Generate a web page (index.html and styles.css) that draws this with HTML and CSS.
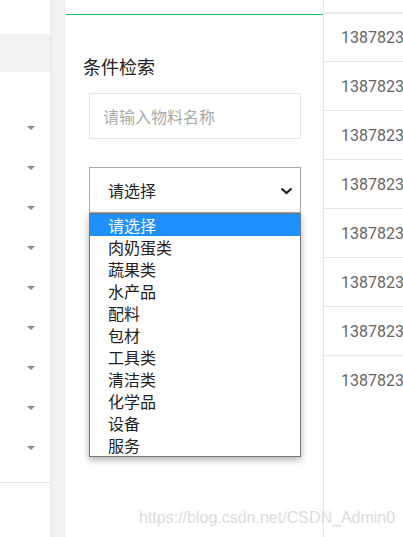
FILE: index.html
```html
<!DOCTYPE html>
<html lang="zh">
<head>
<meta charset="utf-8">
<link rel="stylesheet" href="styles.css">
</head>
<body>
<div class="layout">
  <aside class="sidebar">
    <div class="side-active"></div>
    <ul class="menu">
      <li><span class="caret"></span></li>
      <li><span class="caret"></span></li>
      <li><span class="caret"></span></li>
      <li><span class="caret"></span></li>
      <li><span class="caret"></span></li>
      <li><span class="caret"></span></li>
      <li><span class="caret"></span></li>
      <li><span class="caret"></span></li>
      <li><span class="caret"></span></li>
    </ul>
  </aside>
  <div class="gutter"></div>
  <section class="panel">
    <div class="panel-bar"></div>
    <h2 class="title">条件检索</h2>
    <div class="field">
      <div class="input">请输入物料名称</div>
      <div class="select">
        <span>请选择</span>
        <svg class="chev" width="13" height="8" viewBox="0 0 13 8"><polyline points="1.5,1.5 6.5,6 11.5,1.5" fill="none" stroke="#222" stroke-width="2.2"/></svg>
      </div>
      <ul class="dropdown">
        <li class="on">请选择</li>
        <li>肉奶蛋类</li>
        <li>蔬果类</li>
        <li>水产品</li>
        <li>配料</li>
        <li>包材</li>
        <li>工具类</li>
        <li>清洁类</li>
        <li>化学品</li>
        <li>设备</li>
        <li>服务</li>
      </ul>
    </div>
  </section>
  <section class="table">
    <div class="row">1387823</div>
    <div class="row">1387823</div>
    <div class="row">1387823</div>
    <div class="row">1387823</div>
    <div class="row">1387823</div>
    <div class="row">1387823</div>
    <div class="row">1387823</div>
    <div class="row last">1387823</div>
  </section>
</div>
<div class="watermark">https://blog.csdn.net/CSDN_Admin0</div>
</body>
</html>
```
FILE: styles.css
```css
* { box-sizing: border-box; }
html, body { margin: 0; padding: 0; }
body {
  width: 403px;
  height: 537px;
  overflow: hidden;
  background: #fff;
  font-family: "Noto Sans CJK SC", "Noto Sans", sans-serif;
  position: relative;
}
.layout {
  display: flex;
  height: 537px;
}
.sidebar {
  width: 51px;
  flex: none;
  border-right: 1px solid #e6e6e6;
  padding-top: 34px;
}
.side-active {
  height: 38px;
  background: #f2f2f2;
}
.menu {
  list-style: none;
  margin: 36px 0 0;
  padding: 0 0 14px;
  border-bottom: 1px solid #e6e6e6;
}
.menu li {
  height: 40px;
  display: flex;
  align-items: center;
  justify-content: flex-end;
  padding-right: 15px;
}
.caret {
  width: 0;
  height: 0;
  border-left: 4px solid transparent;
  border-right: 4px solid transparent;
  border-top: 4px solid #8a8a8a;
}
.gutter {
  width: 15px;
  flex: none;
  background: #f2f2f2;
}
.panel {
  width: 258px;
  flex: none;
  border-right: 1px solid #e6e6e6;
  padding-top: 14px;
}
.panel-bar {
  height: 1px;
  background: #10c95a;
}
.title {
  margin: 39px 0 0 17px;
  font-size: 18px;
  font-weight: normal;
  line-height: 24px;
  color: #222;
}
.field {
  position: relative;
  margin: 15px 0 0 23px;
  width: 212px;
}
.input {
  height: 46px;
  border: 1px solid #e6e6e6;
  padding-left: 13px;
  display: flex;
  align-items: center;
  font-size: 16px;
  color: #aaa;
}
.select {
  margin-top: 28px;
  height: 46px;
  border: 1px solid #a9a9a9;
  padding: 0 7px 0 18px;
  display: flex;
  align-items: center;
  justify-content: space-between;
  font-size: 16px;
  color: #222;
}
.chev { display: block; margin-top: 1px; }
.dropdown {
  position: absolute;
  left: 0;
  top: 120px;
  width: 212px;
  margin: 0;
  padding: 0;
  list-style: none;
  background: #fff;
  border: 1px solid #767676;
  box-shadow: 0 3px 7px rgba(0,0,0,0.3);
}
.dropdown li {
  height: 22px;
  line-height: 22px;
  padding-left: 18px;
  font-size: 16px;
  color: #222;
}
.dropdown li.on {
  background: #1e90ff;
  color: #fff;
}
.table {
  flex: 1;
  padding-top: 12px;
  overflow: hidden;
}
.row {
  height: 49px;
  border-top: 1px solid #e6e6e6;
  padding-left: 17px;
  display: flex;
  align-items: center;
  font-family: Roboto, "Liberation Sans", sans-serif;
  font-size: 16px;
  color: #666;
  white-space: nowrap;
}
.row:first-child {
  border-top: 2px solid #e8e8e8;
  height: 49px;
}
.watermark {
  position: absolute;
  left: 139px;
  top: 509px;
  font-family: "Liberation Sans", Arial, sans-serif;
  font-size: 16px;
  color: #dcdcdc;
  white-space: nowrap;
}
```
